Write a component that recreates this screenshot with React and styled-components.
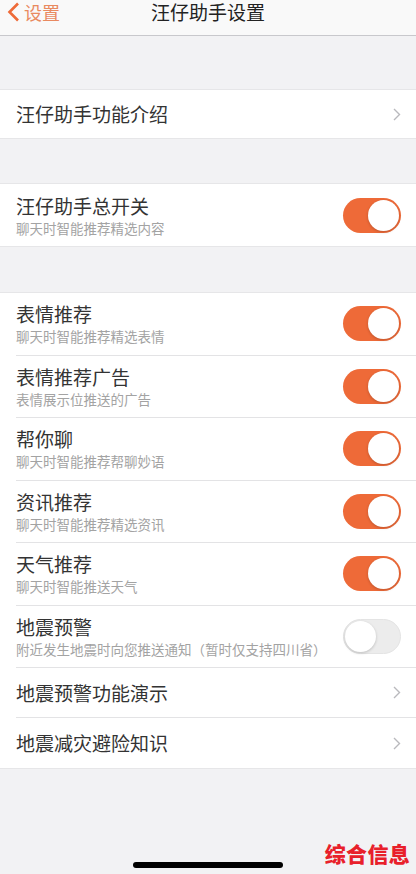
import React from "react";
import styled, { createGlobalStyle } from "styled-components";

const GlobalStyle = createGlobalStyle`
  html, body {
    margin: 0;
    padding: 0;
    background: #f2f2f4;
    font-family: "Noto Sans CJK SC", "Noto Sans", sans-serif;
  }
`;

const ORANGE = "#ee6a38";

const Page = styled.div`
  position: relative;
  min-height: 874px;
  display: flex;
  flex-direction: column;
  background: #f2f2f4;
`;

const Header = styled.div`
  box-sizing: border-box;
  height: 36px;
  padding-top: 2px;
  display: grid;
  grid-template-columns: 1fr auto 1fr;
  align-items: start;
  background: #f9f9f9;
  border-bottom: 1px solid #c8c8cc;
`;

const Back = styled.div`
  display: flex;
  align-items: center;
  gap: 4px;
  padding-left: 7px;
  color: #e98a60;
  font-size: 18px;
  line-height: 19px;
`;

const Title = styled.div`
  font-size: 19px;
  line-height: 19px;
  color: #222;
`;

const Gap = styled.div`
  height: ${(p) => p.$h}px;
  flex-shrink: 0;
`;

const Group = styled.div`
  background: #fff;
  border-top: 1px solid #e6e6e8;
  border-bottom: 1px solid #e6e6e8;
`;

const Row = styled.div`
  box-sizing: border-box;
  height: ${(p) => p.$h}px;
  margin-left: 16px;
  padding-right: 15px;
  display: flex;
  align-items: center;
  justify-content: space-between;
  border-bottom: ${(p) => (p.$last ? "none" : "1px solid #e3e3e5")};
`;

const Texts = styled.div`
  display: flex;
  flex-direction: column;
`;

const Label = styled.div`
  font-size: 19px;
  line-height: 22px;
  color: #333;
`;

const Sub = styled.div`
  font-size: 13.5px;
  line-height: 16px;
  margin-top: 3px;
  color: #a3a3a3;
`;

const Track = styled.div`
  position: relative;
  width: 58px;
  height: 35px;
  box-sizing: border-box;
  border-radius: 18px;
  background: ${(p) => (p.$on ? ORANGE : "#ececec")};
  border: ${(p) => (p.$on ? "none" : "1px solid #e4e4e4")};
`;

const Knob = styled.div`
  position: absolute;
  top: ${(p) => (p.$on ? 2 : 1)}px;
  left: ${(p) => (p.$on ? 25 : 1)}px;
  width: 31px;
  height: 31px;
  border-radius: 50%;
  background: #fff;
  box-shadow: 0 1px 3px rgba(0, 0, 0, 0.2);
`;

const HomeBar = styled.div`
  position: absolute;
  left: 133px;
  bottom: 6px;
  width: 150px;
  height: 6px;
  border-radius: 3px;
  background: #000;
`;

const Mark = styled.div`
  position: absolute;
  right: 6px;
  bottom: 6px;
  font-size: 21px;
  font-weight: 900;
  letter-spacing: 0.3px;
  color: #e8202a;
`;

const Chevron = () => (
  <svg width="8" height="13" viewBox="0 0 8 13">
    <path d="M1 1l5.5 5.5L1 12" fill="none" stroke="#b9b9bd" strokeWidth="1.4" />
  </svg>
);

const Toggle = ({ on }) => (
  <Track $on={on}>
    <Knob $on={on} />
  </Track>
);

const switches = [
  ["表情推荐", "聊天时智能推荐精选表情", true],
  ["表情推荐广告", "表情展示位推送的广告", true],
  ["帮你聊", "聊天时智能推荐帮聊妙语", true],
  ["资讯推荐", "聊天时智能推荐精选资讯", true],
  ["天气推荐", "聊天时智能推送天气", true],
  ["地震预警", "附近发生地震时向您推送通知（暂时仅支持四川省）", false],
];

const links = ["地震预警功能演示", "地震减灾避险知识"];

export default function App() {
  return (
    <>
      <GlobalStyle />
      <Page>
        <Header>
          <Back>
            <svg width="13" height="20" viewBox="0 0 13 20">
              <path d="M11 1.5L2.5 10l8.5 8.5" fill="none" stroke={ORANGE} strokeWidth="2.6" />
            </svg>
            设置
          </Back>
          <Title>汪仔助手设置</Title>
          <div />
        </Header>
        <Gap $h={53} />
        <Group>
          <Row $h={48} $last>
            <Label>汪仔助手功能介绍</Label>
            <Chevron />
          </Row>
        </Group>
        <Gap $h={44} />
        <Group>
          <Row $h={62} $last>
            <Texts>
              <Label>汪仔助手总开关</Label>
              <Sub>聊天时智能推荐精选内容</Sub>
            </Texts>
            <Toggle on />
          </Row>
        </Group>
        <Gap $h={45} />
        <Group>
          {switches.map(([t, s, on]) => (
            <Row key={t} $h={62.5}>
              <Texts>
                <Label>{t}</Label>
                <Sub>{s}</Sub>
              </Texts>
              <Toggle on={on} />
            </Row>
          ))}
          {links.map((t, i) => (
            <Row key={t} $h={50} $last={i === links.length - 1}>
              <Label>{t}</Label>
              <Chevron />
            </Row>
          ))}
        </Group>
        <HomeBar />
        <Mark>综合信息</Mark>
      </Page>
    </>
  );
}
